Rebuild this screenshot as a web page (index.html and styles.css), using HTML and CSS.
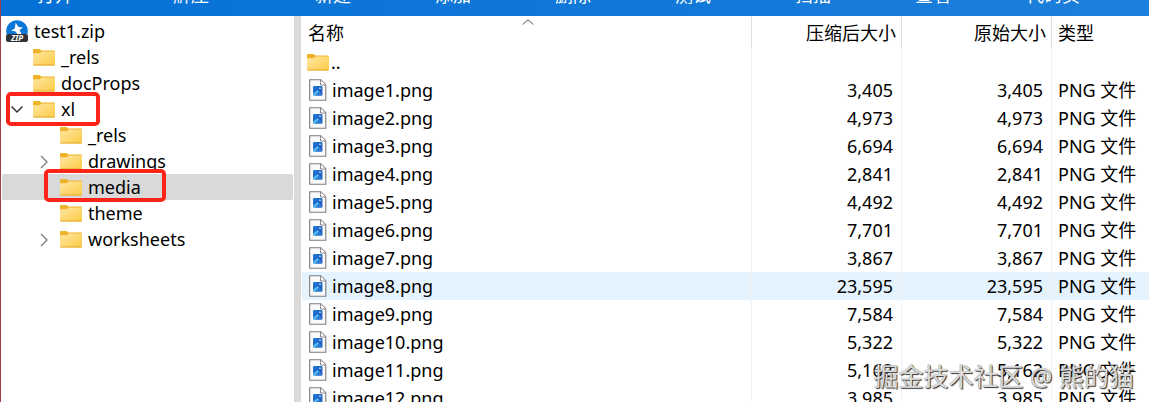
FILE: index.html
```html
<!DOCTYPE html>
<html lang="zh-CN">
<head>
    <meta charset="UTF-8">
    <meta name="viewport" content="width=device-width, initial-scale=1.0">
    <title>test1.zip</title>
    <link rel="stylesheet" href="styles.css">
</head>
<body>
    <!-- shared icons -->
    <svg class="sprite" aria-hidden="true">
        <defs>
            <linearGradient id="folder-front" x1="0" y1="0" x2="1" y2="1">
                <stop offset="0" stop-color="#ffe6a3"/>
                <stop offset="1" stop-color="#fccb45"/>
            </linearGradient>
            <linearGradient id="picture-blue" x1="0" y1="0" x2="1" y2="1">
                <stop offset="0" stop-color="#1f7bd8"/>
                <stop offset="1" stop-color="#1f4fae"/>
            </linearGradient>
        </defs>
        <symbol id="folder" viewBox="0 0 22 18">
            <path d="M0 2.2Q0 1 1.2 1H6.6L8.4 2.6H21Q22 2.6 22 3.6V8H0Z" fill="#eeb32b"/>
            <path d="M0 5.3H6.8L8.6 3.6H22V16.4Q22 17.4 21 17.4H1Q0 17.4 0 16.4Z" fill="url(#folder-front)"/>
            <path d="M0.4 17H21.6" stroke="#e3a92e" stroke-width="1"/>
        </symbol>
        <symbol id="png" viewBox="0 0 18 22">
            <path d="M0.7 0.7H11.8L16.8 5.8V21.3H0.7Z" fill="#fafafa" stroke="#7c7c7c" stroke-width="1.1"/>
            <path d="M11.5 0.9V6H16.6" fill="#fff" stroke="#8c8c8c"/>
            <rect x="4" y="7" width="9.4" height="9.4" rx="1" fill="url(#picture-blue)"/>
            <path d="M4 14.6L8.6 11L10.4 12.4L6.4 16.4H5Q4 16.4 4 15.4Z" fill="#4fb4f0"/>
            <path d="M8.6 11L13.4 15V15.4Q13.4 16.4 12.4 16.4H6.4L10.4 12.4Z" fill="#2878d2"/>
            <circle cx="11" cy="9.2" r="0.8" fill="#fff"/>
        </symbol>
    </svg>

    <nav class="toolbar">
        <button>打开</button>
        <button>解压</button>
        <button>新建</button>
        <button>添加</button>
        <button>删除</button>
        <button>测试</button>
        <button>扫描</button>
        <button>查看</button>
        <button>代码页</button>
    </nav>

    <main class="panes">
        <aside class="tree">
            <ul>
                <li class="root">
                    <svg class="zip-icon" viewBox="0 0 22 22" aria-hidden="true">
                        <path d="M0.4 13A10.8 10.8 0 1 1 21.6 13V14H0.4Z" fill="#0b78d8"/>
                        <path d="M9.6 2.8L12.6 7L16.8 7.6L13.6 10L15.4 14H11.2L9.6 11.4L5 10.6L8.8 8.4Z" fill="#fff"/>
                        <path d="M2 14H20Q22 14 22 16V20Q22 22 20 22H2Q0 22 0 20V16Q0 14 2 14Z" fill="#303236"/>
                        <text x="11" y="20.8" class="zip-text">ZIP</text>
                    </svg>
                    <a href="#">test1.zip</a>
                </li>
                <li>
                    <span class="twisty"></span>
                    <svg class="folder" aria-hidden="true"><use href="#folder"/></svg>
                    <a href="#">_rels</a>
                </li>
                <li>
                    <span class="twisty"></span>
                    <svg class="folder" aria-hidden="true"><use href="#folder"/></svg>
                    <a href="#">docProps</a>
                </li>
                <li>
                    <button class="twisty open" aria-label="收起 xl">
                        <svg viewBox="0 0 16 16"><path d="M2.5 5.5L8 11L13.5 5.5"/></svg>
                    </button>
                    <svg class="folder" aria-hidden="true"><use href="#folder"/></svg>
                    <a href="#">xl</a>
                    <span class="mark mark-xl"></span>
                </li>
                <li class="child">
                    <span class="twisty"></span>
                    <svg class="folder" aria-hidden="true"><use href="#folder"/></svg>
                    <a href="#">_rels</a>
                </li>
                <li class="child">
                    <button class="twisty" aria-label="展开 drawings">
                        <svg viewBox="0 0 16 16"><path d="M5 3L11 9L5 15"/></svg>
                    </button>
                    <svg class="folder" aria-hidden="true"><use href="#folder"/></svg>
                    <a href="#">drawings</a>
                </li>
                <li class="child selected">
                    <span class="twisty"></span>
                    <svg class="folder" aria-hidden="true"><use href="#folder"/></svg>
                    <a href="#">media</a>
                    <span class="mark mark-media"></span>
                </li>
                <li class="child">
                    <span class="twisty"></span>
                    <svg class="folder" aria-hidden="true"><use href="#folder"/></svg>
                    <a href="#">theme</a>
                </li>
                <li class="child">
                    <button class="twisty" aria-label="展开 worksheets">
                        <svg viewBox="0 0 16 16"><path d="M5 3L11 9L5 15"/></svg>
                    </button>
                    <svg class="folder" aria-hidden="true"><use href="#folder"/></svg>
                    <a href="#">worksheets</a>
                </li>
            </ul>
        </aside>

        <section class="files">
            <table>
                <colgroup>
                    <col>
                    <col class="col-size">
                    <col class="col-size">
                    <col class="col-type">
                </colgroup>
                <thead>
                    <tr>
                        <th>名称
                            <svg class="sort" viewBox="0 0 12 6" aria-hidden="true"><path d="M0.7 5.5L6 0.8L11.3 5.5"/></svg>
                        </th>
                        <th class="num">压缩后大小</th>
                        <th class="num">原始大小</th>
                        <th>类型</th>
                    </tr>
                </thead>
                <tbody id="rows">
                    <tr>
                        <td class="up"><div class="name"><svg class="folder" aria-hidden="true"><use href="#folder"/></svg>..</div></td>
                        <td></td>
                        <td></td>
                        <td></td>
                    </tr>
                </tbody>
            </table>
        </section>
    </main>

    <div class="watermark">掘金技术社区 @ 熊的猫</div>

    <script>
        const sizes = ['3,405', '4,973', '6,694', '2,841', '4,492', '7,701',
                       '3,867', '23,595', '7,584', '5,322', '5,162', '3,985'];
        const rows = document.getElementById('rows');

        sizes.forEach((size, i) => {
            const tr = document.createElement('tr');
            if (i === 7) {
                tr.className = 'hover';
            }
            tr.innerHTML = `
                <td><div class="name"><svg class="png" aria-hidden="true"><use href="#png"/></svg>image${i + 1}.png</div></td>
                <td class="num">${size}</td>
                <td class="num">${size}</td>
                <td>PNG 文件</td>`;
            rows.appendChild(tr);
        });
    </script>
</body>
</html>
```
FILE: styles.css
```css
* {
    box-sizing: border-box;
}
body {
    margin: 0;
    height: 100vh;
    display: flex;
    flex-direction: column;
    overflow: hidden;
    position: relative;
    border-left: 1px solid #a04048;
    background-color: #fff;
    color: #000;
    font-family: "Noto Sans", "Noto Sans CJK SC", sans-serif;
    font-size: 18px;
    line-height: 26px;
}
button {
    padding: 0;
    border: none;
    background: none;
    color: inherit;
    font: inherit;
}
a {
    color: inherit;
    text-decoration: none;
}
.sprite {
    position: absolute;
    width: 0;
    height: 0;
}

/* toolbar, only its lower edge is in view */
.toolbar {
    flex: none;
    height: 16px;
    display: grid;
    grid-template-columns: 108px 164px 120px repeat(6, 120px);
    grid-template-rows: 16px;
    align-items: end;
    overflow: hidden;
    background: linear-gradient(to right, #0570d6, #1c7fdb);
    color: #fff;
}
.toolbar button {
    padding-bottom: 8px;
}

.panes {
    flex: 1;
    min-height: 0;
    display: flex;
}

/* folder tree */
.tree {
    flex: none;
    width: 300px;
    padding: 2px 1px 0 1px;
    border-right: 7px solid #dadada;
}
.tree ul {
    margin: 0;
    padding: 0;
    list-style: none;
}
.tree li {
    position: relative;
    display: flex;
    align-items: center;
    height: 26px;
    padding-left: 7px;
    border-radius: 2px;
}
.tree li.root {
    padding-left: 4px;
}
.tree li.child {
    padding-left: 34px;
}
.tree li.selected {
    background-color: #d9d9d9;
}
.twisty {
    width: 16px;
    height: 16px;
    margin-right: 8px;
}
.twisty svg {
    display: block;
    fill: none;
    stroke: #8a8a8a;
    stroke-width: 1.5;
}
.twisty.open svg {
    stroke: #333;
}
.folder {
    flex: none;
    width: 22px;
    height: 18px;
    margin-right: 6px;
}
.zip-icon {
    width: 22px;
    height: 22px;
    margin-right: 6px;
}
.zip-text {
    fill: #fff;
    font-size: 8px;
    font-weight: bold;
    font-style: italic;
    text-anchor: middle;
}
.mark {
    position: absolute;
    z-index: 1;
    border: 4px solid #fb2419;
    border-radius: 5px;
}
.mark-xl {
    top: -4px;
    left: 4px;
    width: 94px;
    height: 34px;
}
.mark-media {
    top: -5px;
    left: 42px;
    width: 122px;
    height: 33px;
}

/* file list */
.files {
    flex: 1;
    min-width: 0;
    padding-left: 1px;
    overflow: hidden;
}
table {
    width: 100%;
    table-layout: fixed;
    border-collapse: separate;
    border-spacing: 0;
}
.col-size {
    width: 150px;
}
.col-type {
    width: 98px;
}
th {
    position: relative;
    height: 32px;
    padding: 2px 6px 0;
    font-weight: normal;
    text-align: left;
}
td {
    height: 28px;
    padding: 0 6px;
    white-space: nowrap;
}
th + th {
    border-left: 1px solid #dedede;
}
td + td {
    border-left: 1px solid #f0f2f4;
}
th.num {
    padding-right: 5px;
    text-align: right;
}
td.num {
    padding-right: 8px;
    text-align: right;
}
td:first-child {
    padding-left: 7px;
}
td.up {
    padding-left: 5px;
}
.name {
    display: flex;
    align-items: center;
}
.name .folder {
    margin-right: 2px;
}
.png {
    width: 18px;
    height: 22px;
    margin-right: 5px;
}
.hover {
    background-color: #e5f3ff;
}
.sort {
    position: absolute;
    top: 3px;
    left: calc(50% - 5px);
    width: 12px;
    height: 6px;
    fill: none;
    stroke: #555;
}

.watermark {
    position: absolute;
    right: 15px;
    bottom: 8px;
    color: #dcdcdc;
    font-size: 25px;
    line-height: 36px;
    text-shadow: 1px 1px 1px #333, 0 0 1px #777;
    pointer-events: none;
}
```
